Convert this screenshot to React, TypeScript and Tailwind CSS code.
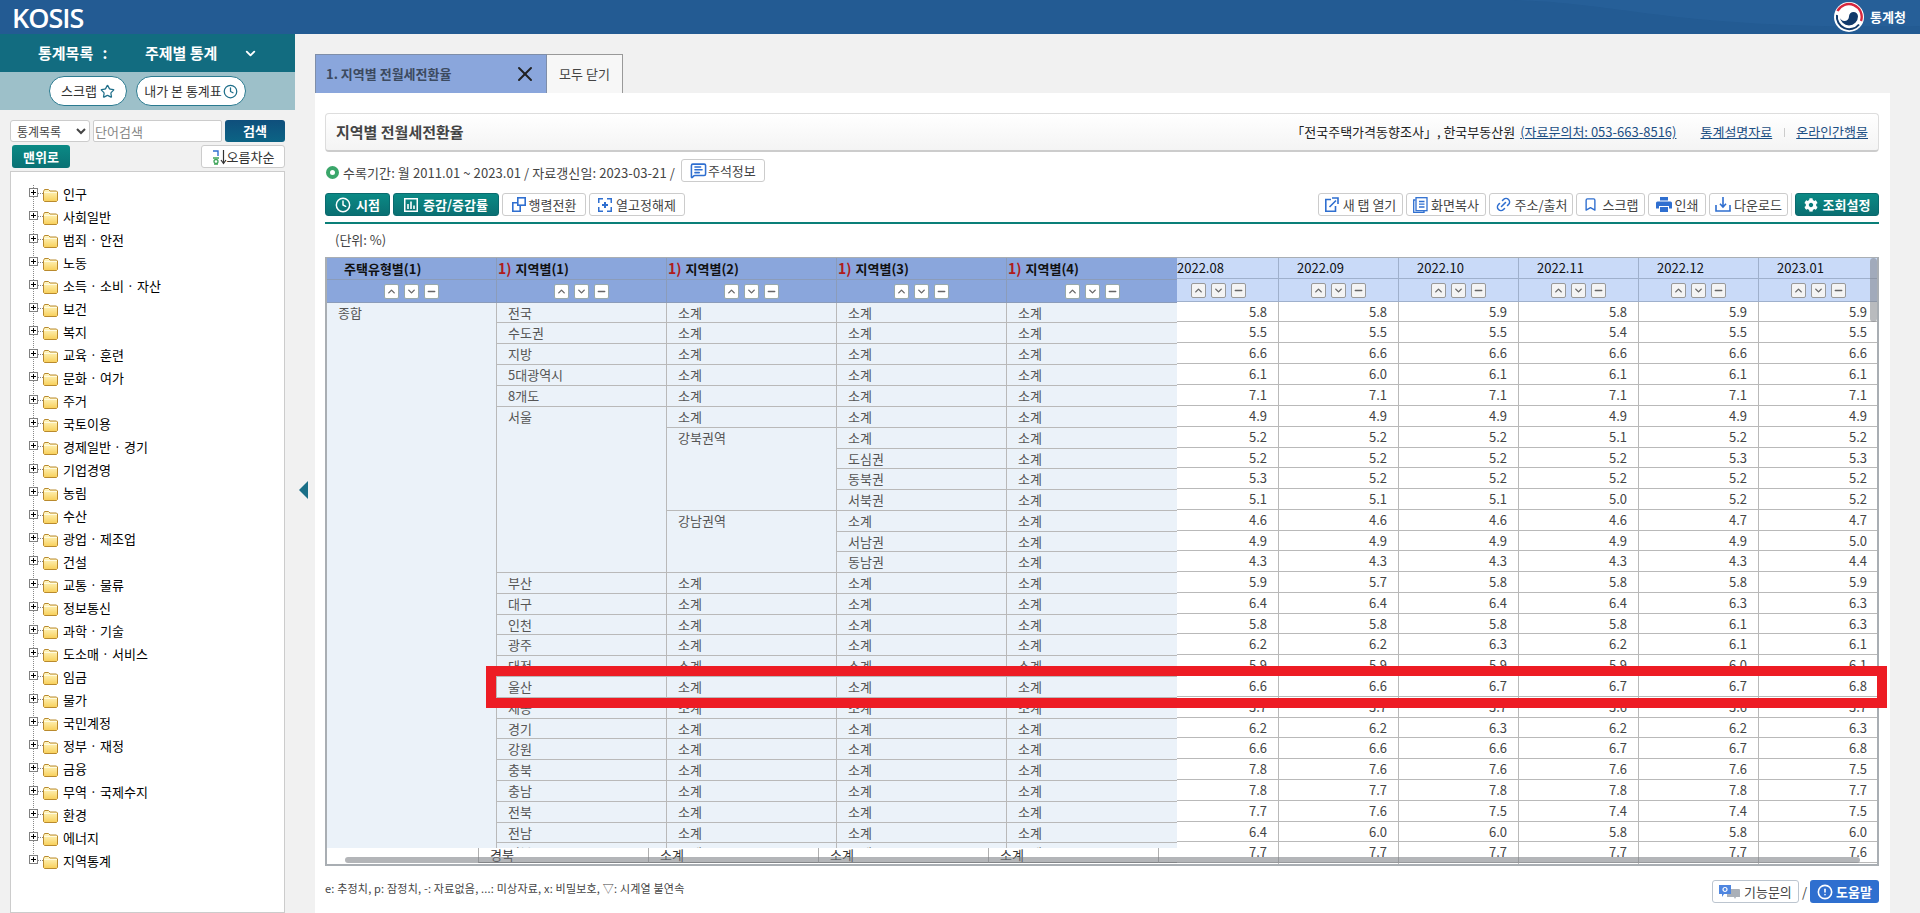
import React from 'react';
import { ChevronDown, ChevronUp, Minus, Star, Clock, X, MessageSquareText, Link2, Bookmark, CircleAlert } from 'lucide-react';
import { FaCog } from 'react-icons/fa';

const categories = [
  '인구', '사회일반', '범죄 · 안전', '노동', '소득 · 소비 · 자산', '보건', '복지', '교육 · 훈련', '문화 · 여가', '주거',
  '국토이용', '경제일반 · 경기', '기업경영', '농림', '수산', '광업 · 제조업', '건설', '교통 · 물류', '정보통신', '과학 · 기술',
  '도소매 · 서비스', '임금', '물가', '국민계정', '정부 · 재정', '금융', '무역 · 국제수지', '환경', '에너지', '지역통계',
];

const months = ['2022.08', '2022.09', '2022.10', '2022.11', '2022.12', '2023.01'];

type Row = {
  h: 20 | 21;
  region?: string;
  regionSpan?: number;
  sub?: string;
  subSpan?: number;
  third: string;
  vals: string[];
};

const rows: Row[] = [
  { h: 20, region: '전국', sub: '소계', third: '소계', vals: ['5.8', '5.8', '5.9', '5.8', '5.9', '5.9'] },
  { h: 21, region: '수도권', sub: '소계', third: '소계', vals: ['5.5', '5.5', '5.5', '5.4', '5.5', '5.5'] },
  { h: 21, region: '지방', sub: '소계', third: '소계', vals: ['6.6', '6.6', '6.6', '6.6', '6.6', '6.6'] },
  { h: 21, region: '5대광역시', sub: '소계', third: '소계', vals: ['6.1', '6.0', '6.1', '6.1', '6.1', '6.1'] },
  { h: 21, region: '8개도', sub: '소계', third: '소계', vals: ['7.1', '7.1', '7.1', '7.1', '7.1', '7.1'] },
  { h: 21, region: '서울', regionSpan: 8, sub: '소계', third: '소계', vals: ['4.9', '4.9', '4.9', '4.9', '4.9', '4.9'] },
  { h: 21, sub: '강북권역', subSpan: 4, third: '소계', vals: ['5.2', '5.2', '5.2', '5.1', '5.2', '5.2'] },
  { h: 20, third: '도심권', vals: ['5.2', '5.2', '5.2', '5.2', '5.3', '5.3'] },
  { h: 21, third: '동북권', vals: ['5.3', '5.2', '5.2', '5.2', '5.2', '5.2'] },
  { h: 21, third: '서북권', vals: ['5.1', '5.1', '5.1', '5.0', '5.2', '5.2'] },
  { h: 21, sub: '강남권역', subSpan: 3, third: '소계', vals: ['4.6', '4.6', '4.6', '4.6', '4.7', '4.7'] },
  { h: 20, third: '서남권', vals: ['4.9', '4.9', '4.9', '4.9', '4.9', '5.0'] },
  { h: 21, third: '동남권', vals: ['4.3', '4.3', '4.3', '4.3', '4.3', '4.4'] },
  { h: 21, region: '부산', sub: '소계', third: '소계', vals: ['5.9', '5.7', '5.8', '5.8', '5.8', '5.9'] },
  { h: 21, region: '대구', sub: '소계', third: '소계', vals: ['6.4', '6.4', '6.4', '6.4', '6.3', '6.3'] },
  { h: 20, region: '인천', sub: '소계', third: '소계', vals: ['5.8', '5.8', '5.8', '5.8', '6.1', '6.3'] },
  { h: 21, region: '광주', sub: '소계', third: '소계', vals: ['6.2', '6.2', '6.3', '6.2', '6.1', '6.1'] },
  { h: 21, region: '대전', sub: '소계', third: '소계', vals: ['5.9', '5.9', '5.9', '5.9', '6.0', '6.1'] },
  { h: 21, region: '울산', sub: '소계', third: '소계', vals: ['6.6', '6.6', '6.7', '6.7', '6.7', '6.8'] },
  { h: 21, region: '세종', sub: '소계', third: '소계', vals: ['3.7', '3.7', '3.7', '3.6', '3.6', '3.7'] },
  { h: 20, region: '경기', sub: '소계', third: '소계', vals: ['6.2', '6.2', '6.3', '6.2', '6.2', '6.3'] },
  { h: 21, region: '강원', sub: '소계', third: '소계', vals: ['6.6', '6.6', '6.6', '6.7', '6.7', '6.8'] },
  { h: 21, region: '충북', sub: '소계', third: '소계', vals: ['7.8', '7.6', '7.6', '7.6', '7.6', '7.5'] },
  { h: 21, region: '충남', sub: '소계', third: '소계', vals: ['7.8', '7.7', '7.8', '7.8', '7.8', '7.7'] },
  { h: 21, region: '전북', sub: '소계', third: '소계', vals: ['7.7', '7.6', '7.5', '7.4', '7.4', '7.5'] },
  { h: 20, region: '전남', sub: '소계', third: '소계', vals: ['6.4', '6.0', '6.0', '5.8', '5.8', '6.0'] },
  { h: 21, region: '경북', sub: '소계', third: '소계', vals: ['7.7', '7.7', '7.7', '7.7', '7.7', '7.6'] },
];

const bodyCell = 'align-top border-b border-r last:border-r-0 border-[#b9b9b9] pl-[11px] pt-[1px] leading-[18px] text-[13px] text-[#555] whitespace-nowrap';

function SortButtons({ light }: { light?: boolean }) {
  const cls = light
    ? 'w-[15px] h-[15px] rounded-[2px] border border-[#999] bg-[#f4f4f4] flex items-center justify-center text-[#666]'
    : 'w-[15px] h-[15px] rounded-[2px] border border-[#9aa] bg-white flex items-center justify-center text-[#666]';
  return (
    <div className="flex justify-center gap-[5px]">
      <span className={cls}><ChevronUp size={11} strokeWidth={3} /></span>
      <span className={cls}><ChevronDown size={11} strokeWidth={3} /></span>
      <span className={cls}><Minus size={11} strokeWidth={3} /></span>
    </div>
  );
}

function Folder() {
  return (
    <svg width="15" height="14" viewBox="0 0 15 14" className="shrink-0">
      <defs>
        <linearGradient id="folderFill" x1="0" y1="0" x2="0" y2="1">
          <stop offset="0" stopColor="#fff8c8" />
          <stop offset="1" stopColor="#f8cf58" />
        </linearGradient>
      </defs>
      <path d="M.5 3.5 L1.5 1.5 H5.5 L7 3 H13.5 L14.5 4 V12.5 L13.5 13.5 H1.5 L.5 12.5 Z" fill="url(#folderFill)" stroke="#b98a2e" />
      <path d="M1 4.5 H14" stroke="#fffbe0" />
    </svg>
  );
}

function TreeItem({ label }: { label: string }) {
  return (
    <li className="h-[23px] flex items-center relative">
      <svg width="9" height="9" viewBox="0 0 9 9" className="ml-[18px] relative -top-[1px] shrink-0">
        <rect x=".5" y=".5" width="8" height="8" fill="#fff" stroke="#808080" />
        <path d="M2 4.5 H7 M4.5 2 V7" stroke="#000" />
      </svg>
      <span className="w-[5px] border-t border-dotted border-[#888] shrink-0" />
      <span className="relative top-[1px] shrink-0"><Folder /></span>
      <span className="ml-[5px] text-[13px] text-black whitespace-nowrap">{label}</span>
    </li>
  );
}

function Sidebar() {
  return (
    <aside className="w-[295px] shrink-0 flex flex-col">
      <div className="h-[38px] bg-[#126c80] flex items-center text-white font-bold text-[15px]">
        <span className="ml-[38px] w-[107px] whitespace-nowrap">통계목록<span className="ml-[6px]"> :</span></span>
        <span>주제별 통계</span>
        <ChevronDown size={15} strokeWidth={3} className="ml-[26px]" />
      </div>
      <div className="h-[38px] bg-[#9dc0c9] flex items-center pl-[49px] gap-[9px]">
        <span className="h-[30px] w-[78px] rounded-full bg-white border border-[#2a7a90] flex items-center justify-center gap-[3px] text-[13px] text-[#333]">
          스크랩 <Star size={15} className="text-[#1f6f8a]" />
        </span>
        <span className="h-[30px] w-[110px] rounded-full bg-white border border-[#2a7a90] flex items-center justify-center gap-[1px] text-[13px] text-[#333]">
          내가 본 통계표 <Clock size={15} className="text-[#1f6f8a]" />
        </span>
      </div>
      <div className="flex px-[10px] mt-[10px] gap-[3px]">
        <select className="w-[80px] h-[22px] border border-[#ccc] rounded-[3px] bg-white text-[12px] text-[#444] pl-[2px]">
          <option>통계목록</option>
        </select>
        <input className="w-[129px] h-[22px] border border-[#ccc] rounded-[2px] bg-white px-[1px] text-[13px] placeholder:text-[#888]" placeholder="단어검색" />
        <button className="w-[60px] h-[22px] rounded-[3px] bg-gradient-to-b from-[#0f4f7c] to-[#0c6485] text-white font-bold text-[13px]">검색</button>
      </div>
      <div className="flex justify-between pl-[12px] pr-[10px] mt-[3px]">
        <button className="w-[58px] h-[23px] rounded-[3px] bg-gradient-to-b from-[#0b8a85] to-[#0a7174] text-white font-bold text-[13px]">맨위로</button>
        <button className="w-[84px] h-[23px] rounded-[3px] border border-[#ccc] bg-white flex items-center justify-center text-[13px] text-[#333]">
          <svg width="15" height="16" viewBox="0 0 15 16">
            <path d="M1 2 H6 V7" fill="none" stroke="#2f6fd0" strokeWidth="1.4" />
            <path d="M1 9 H7 M2 15 H6" fill="none" stroke="#3fa55a" strokeWidth="1.4" />
            <circle cx="4" cy="12.5" r="2" fill="none" stroke="#3fa55a" strokeWidth="1.3" />
            <path d="M11.5 1 V14 M9 11 L11.5 14.5 L14 11" fill="none" stroke="#333" strokeWidth="1.2" />
          </svg>
          오름차순
        </button>
      </div>
      <div className="flex-1 mx-[10px] mt-[3px] border border-[#ccc] bg-white pt-[10px] min-h-0">
        <ul className="relative">
          <span className="absolute left-[22px] top-[3px] h-[675px] border-l border-dotted border-[#888]" />
          {categories.map((c) => <TreeItem key={c} label={c} />)}
        </ul>
      </div>
    </aside>
  );
}

function ToolButton({ width, children, className }: { width: string; children: React.ReactNode; className?: string }) {
  return (
    <button className={`${width} h-[23px] rounded-[3px] border border-[#ccc] bg-white flex items-center justify-center gap-[3px] text-[13px] text-[#444] whitespace-nowrap ${className ?? ''}`}>
      {children}
    </button>
  );
}

function TealButton({ width, children }: { width: string; children: React.ReactNode }) {
  return (
    <button className={`${width} h-[23px] rounded-[3px] bg-gradient-to-b from-[#0b8a85] to-[#0a6f72] border border-[#0a6a6e] flex items-center justify-center gap-[5px] text-[13px] font-bold text-white whitespace-nowrap`}>
      {children}
    </button>
  );
}

function Toolbar() {
  return (
    <div className="flex h-[23px] items-center">
      <div className="flex gap-[3px]">
        <TealButton width="w-[65px]"><Clock size={16} strokeWidth={2.2} />시점</TealButton>
        <TealButton width="w-[106px]">
          <svg width="14" height="14" viewBox="0 0 14 14">
            <rect x=".75" y=".75" width="12.5" height="12.5" fill="none" stroke="#fff" strokeWidth="1.5" />
            <path d="M4 6 V11 M7 3.5 V11 M10 7.5 V11" stroke="#fff" strokeWidth="1.6" />
          </svg>
          증감/증감률
        </TealButton>
        <ToolButton width="w-[84px]">
          <svg width="14" height="15" viewBox="0 0 14 15" fill="none" stroke="#2f6fd0" strokeWidth="1.6">
            <rect x="5.8" y=".8" width="7.4" height="7.4" />
            <path d="M5.8 5.8 H.8 V14.2 H8.2 V8.2" />
          </svg>
          행렬전환
        </ToolButton>
        <ToolButton width="w-[96px]">
          <svg width="14" height="14" viewBox="0 0 14 14" fill="none" stroke="#2f6fd0" strokeWidth="1.5" className="mr-[1px]">
            <path d="M.75 5 V.75 H5 M9 .75 H13.25 V5 M13.25 9 V13.25 H9 M5 13.25 H.75 V9" />
            <path d="M7 4 V10 M4 7 H10" strokeWidth="2" />
          </svg>
          열고정해제
        </ToolButton>
      </div>
      <div className="ml-auto flex gap-[3px] items-center">
        <ToolButton width="w-[85px]">
          <svg width="14" height="15" viewBox="0 0 14 15" fill="none" stroke="#2f6fd0" strokeWidth="1.6" className="mr-[1px]">
            <path d="M6 2.5 H.8 V14.2 H10.5 V9" />
            <path d="M4.5 10 L11 3.5 M7 1 H13 V7" />
          </svg>
          새 탭 열기
        </ToolButton>
        <ToolButton width="w-[80px]">
          <svg width="15" height="16" viewBox="0 0 15 16" fill="none" stroke="#2f6fd0" strokeWidth="1.3">
            <path d="M2.5 3 H.7 V15.3 H11 V13.5" />
            <rect x="3" y=".7" width="11" height="13" />
            <path d="M6 4.5 H11.5 M6 7.2 H11.5 M6 10 H11.5" />
          </svg>
          화면복사
        </ToolButton>
        <ToolButton width="w-[84px]"><Link2 size={17} className="text-[#2f6fd0] -rotate-45" strokeWidth={2.2} />주소/출처</ToolButton>
        <ToolButton width="w-[69px]"><Bookmark size={15} className="text-[#2f6fd0]" strokeWidth={2.2} /><span className="ml-[2px]">스크랩</span></ToolButton>
        <ToolButton width="w-[58px]">
          <svg width="16" height="15" viewBox="0 0 16 15" fill="#2f6fd0">
            <rect x="4" y="0" width="8" height="3.5" />
            <path d="M0 6 Q0 4.5 1.5 4.5 H14.5 Q16 4.5 16 6 V11.5 H13 V9 H3 V11.5 H0 Z" />
            <rect x="4" y="10" width="8" height="5" />
          </svg>
          인쇄
        </ToolButton>
        <ToolButton width="w-[79px]">
          <svg width="16" height="15" viewBox="0 0 16 15" fill="none" stroke="#2f6fd0" strokeWidth="1.6">
            <path d="M8 0 V9.5 M5 6.8 L8 10 L11 6.8" />
            <path d="M1 8 V14 H15 V8" />
          </svg>
          다운로드
        </ToolButton>
        <span className="w-[1px] h-[23px] bg-[#ddd]" />
        <TealButton width="w-[84px]"><FaCog size={14} />조회설정</TealButton>
      </div>
    </div>
  );
}

function FrozenHeader({ label, numbered }: { label: string; numbered?: boolean }) {
  return (
    <th className="h-[21px] border-b border-r last:border-r-0 border-[#8b9cba] bg-[#8aa6dc] p-0 text-[13px] font-bold text-[#111] text-left whitespace-nowrap">
      {numbered ? (
        <span className="pl-[1px]"><span className="text-[14px] text-[#b01c1c]">1)</span><span className="ml-[4px]">{label}</span></span>
      ) : (
        <span className="pl-[17px]">{label}</span>
      )}
    </th>
  );
}

function FrozenTable() {
  return (
    <table className="table-fixed w-[850px] border-separate border-spacing-0">
      <thead>
        <tr>
          <FrozenHeader label="주택유형별(1)" />
          <FrozenHeader label="지역별(1)" numbered />
          <FrozenHeader label="지역별(2)" numbered />
          <FrozenHeader label="지역별(3)" numbered />
          <FrozenHeader label="지역별(4)" numbered />
        </tr>
        <tr>
          {[0, 1, 2, 3, 4].map((i) => (
            <th key={i} className="h-[23px] border-b border-r last:border-r-0 border-[#8b9cba] bg-[#8aa6dc] p-0 font-normal">
              <SortButtons />
            </th>
          ))}
        </tr>
      </thead>
      <tbody className="bg-[#ebf2f9]">
        {rows.map((r, i) => (
          <tr key={i} className={r.h === 20 ? 'h-[20px]' : 'h-[21px]'}>
            {i === 0 && <td rowSpan={27} className={bodyCell}>종합</td>}
            {r.region && <td rowSpan={r.regionSpan ?? 1} className={bodyCell}>{r.region}</td>}
            {r.sub && <td rowSpan={r.subSpan ?? 1} className={bodyCell}>{r.sub}</td>}
            <td className={bodyCell}>{r.third}</td>
            <td className={bodyCell}>소계</td>
          </tr>
        ))}
      </tbody>
    </table>
  );
}

function DataTable() {
  return (
    <table className="table-fixed w-[720px] -ml-[18px] border-separate border-spacing-0">
      <thead>
        <tr>
          {months.map((m) => (
            <th key={m} className="h-[21px] border-b border-r border-[#9fb0cc] bg-[#c9daf8] p-0 pl-[18px] text-left text-[13px] font-normal text-[#111]">{m}</th>
          ))}
        </tr>
        <tr>
          {months.map((m) => (
            <th key={m} className="h-[23px] border-b border-r border-[#9fb0cc] bg-[#c9daf8] p-0 font-normal">
              <SortButtons light />
            </th>
          ))}
        </tr>
      </thead>
      <tbody className="bg-white">
        {rows.map((r, i) => (
          <tr key={i} className={r.h === 20 ? 'h-[20px]' : 'h-[21px]'}>
            {r.vals.map((v, j) => (
              <td key={j} className="align-top border-b border-r border-[#b9b9b9] pr-[11px] pt-[1px] leading-[18px] text-right text-[13px] text-[#444]">{v}</td>
            ))}
          </tr>
        ))}
        <tr className="h-[3px]">
          {months.map((m) => <td key={m} className="border-r border-[#b9b9b9]" />)}
        </tr>
      </tbody>
    </table>
  );
}

function StatsTable() {
  return (
    <div className="relative h-[609px] shrink-0 mt-[5px] flex border-t border-l-2 border-r-2 border-b-2 border-[#a9aeb3]">
      <div className="w-[850px] shrink-0 flex flex-col">
        <div className="h-[590px] shrink-0 overflow-hidden"><FrozenTable /></div>
        <div className="flex pl-[151px] overflow-hidden">
          {['경북', '소계', '소계', '소계', ''].map((t, i) => (
            <div key={i} className="w-[170px] shrink-0 border-l border-[#b0b0b0] pl-[11px] text-[13px] leading-[13px] text-[#333] border-b border-b-[#888] h-[15px] whitespace-nowrap">{t}</div>
          ))}
        </div>
      </div>
      <div className="flex-1 overflow-hidden"><DataTable /></div>
      <div className="absolute z-10 left-[18px] top-[599px] w-[1515px] h-[6px] rounded-full bg-[#808488]/60" />
      <div className="absolute z-10 left-[1543px] top-0 w-[7px] h-[64px] rounded-full bg-[#808488]/55" />
      <div className="absolute z-20 left-[159px] top-[408px] w-[1401px] h-[42px] border-[10px] border-[#ed1c24]" />
    </div>
  );
}

function TitleBox() {
  return (
    <div className="h-[39px] shrink-0 rounded-[4px] border border-[#ddd] border-b-2 border-b-[#ccc] bg-gradient-to-b from-white to-[#f4f4f4] flex items-center px-[10px] text-[13px]">
      <h1 className="text-[15px] font-bold text-[#444]">지역별 전월세전환율</h1>
      <div className="ml-auto flex items-center text-[#222] whitespace-nowrap">
        <span>「전국주택가격동향조사」, 한국부동산원</span>
        <a className="ml-[5px] underline text-[#1c4f84]">(자료문의처: 053-663-8516)</a>
        <a className="ml-[24px] underline text-[#1c4f84]">통계설명자료</a>
        <span className="ml-[12px] mr-[11px] w-[1px] h-[9px] bg-[#ccc]" />
        <a className="underline text-[#1c4f84]">온라인간행물</a>
      </div>
    </div>
  );
}

export default function App() {
  return (
    <div className="w-[1920px] h-[913px] overflow-hidden flex flex-col bg-[#f1f1f1] font-['Noto_Sans_CJK_KR','Noto_Sans',sans-serif]">
      <header className="h-[34px] shrink-0 bg-[#235b93] flex items-center relative overflow-hidden">
        <span className="ml-[12px] font-['Open_Sans',sans-serif] text-[27px] font-semibold text-white tracking-[-1px] leading-none">KOSIS</span>
        <svg width="420" height="34" viewBox="0 0 420 34" className="absolute right-0 top-0">
          <path d="M0 0 C120 0 160 30 420 26 V0 Z" fill="#2a639e" opacity="0.5" />
        </svg>
        <div className="ml-auto relative flex items-center pr-[14px]">
          <svg width="30" height="30" viewBox="0 0 30 30">
            <circle cx="15" cy="15" r="15" fill="#fff" />
            <path d="M3.5 9 A12.8 12.8 0 0 1 27 19" fill="none" stroke="#d7263d" strokeWidth="2.4" />
            <path d="M3 13 A12.4 12.4 0 0 0 25 22.5" fill="none" stroke="#123a6b" strokeWidth="2" />
            <path d="M6 14.5 a9 9 0 0 0 18 0 a4.5 4.5 0 0 0 -9 0 a4.5 4.5 0 0 1 -9 0 z" fill="#123a6b" />
          </svg>
          <span className="ml-[6px] text-[13px] font-bold text-white">통계청</span>
        </div>
      </header>
      <div className="flex-1 flex min-h-0">
        <Sidebar />
        <div className="w-[20px] shrink-0 flex items-center justify-center">
          <span className="w-0 h-0 border-y-[9px] border-y-transparent border-r-[9px] border-r-[#1a6f87] relative top-[16px] -left-[2px]" />
        </div>
        <main className="flex-1 flex flex-col pt-[20px] pr-[30px] min-w-0">
          <div className="flex h-[39px] shrink-0">
            <div className="w-[232px] bg-[#8aa6dc] border border-[#7f8ea8] border-b-0 flex items-center pl-[10px] pr-[9px] text-[13px] font-bold text-[#3c4a60]">
              <span>1. 지역별 전월세전환율</span>
              <X size={24} strokeWidth={2} className="ml-auto text-[#222]" />
            </div>
            <div className="w-[76px] border border-l-0 border-[#999] border-b-0 bg-[#f7f7f7] flex items-center justify-center text-[13px] text-[#444]">모두 닫기</div>
          </div>
          <section className="flex-1 bg-white pl-[10px] pr-[11px] pt-[20px] flex flex-col min-h-0">
            <TitleBox />
            <div className="flex items-center h-[41px] shrink-0 text-[13px] text-[#444] whitespace-nowrap">
              <span className="ml-[1px] w-[13px] h-[13px] rounded-full border-[4px] border-[#3aa66a] bg-white" />
              <span className="ml-[4px] tracking-[0.08px]">수록기간: 월 2011.01 ~ 2023.01 / 자료갱신일: 2023-03-21 /</span>
              <span className="ml-[6px] w-[84px] h-[23px] -mt-[4px] rounded-[3px] border border-[#ccc] flex items-center justify-center gap-[1px]">
                <MessageSquareText size={17} strokeWidth={2.2} className="text-[#2f6fd0]" />주석정보
              </span>
            </div>
            <Toolbar />
            <div className="h-[2px] shrink-0 bg-[#0a7f78] mt-[6px]" />
            <div className="h-[24px] shrink-0 pl-[10px] flex items-center text-[13px] text-[#444] mt-[4px]">(단위: %)</div>
            <StatsTable />
            <div className="flex items-start mt-[14px] text-[11px] text-[#444] whitespace-nowrap">
              <span className="leading-[16px] tracking-[0.2px]">e: 추정치, p: 잠정치, -: 자료없음, ...: 미상자료, x: 비밀보호, ▽: 시계열 불연속</span>
              <div className="ml-auto flex items-center text-[13px]">
                <span className="w-[87px] h-[23px] rounded-[3px] border border-[#bcc5cf] flex items-center justify-center gap-[3px] text-[#444]">
                  <svg width="22" height="14" viewBox="0 0 22 14">
                    <path d="M8 4 H20 Q21 4 21 5 V12 H17 L16 14 L15 12 H8 Z" fill="#aab0b8" />
                    <path d="M0 0 H12 V9 H5 L3 12 L3 9 H0 Z" fill="#4f86e0" />
                    <circle cx="6" cy="4.5" r="2" fill="none" stroke="#fff" strokeWidth="1.2" />
                  </svg>
                  기능문의
                </span>
                <span className="mx-[3px]">/</span>
                <span className="w-[69px] h-[23px] rounded-[3px] bg-[#2f6fcf] flex items-center justify-center gap-[3px] text-white font-bold">
                  <CircleAlert size={16} strokeWidth={2.4} />도움말
                </span>
              </div>
            </div>
          </section>
        </main>
      </div>
    </div>
  );
}
